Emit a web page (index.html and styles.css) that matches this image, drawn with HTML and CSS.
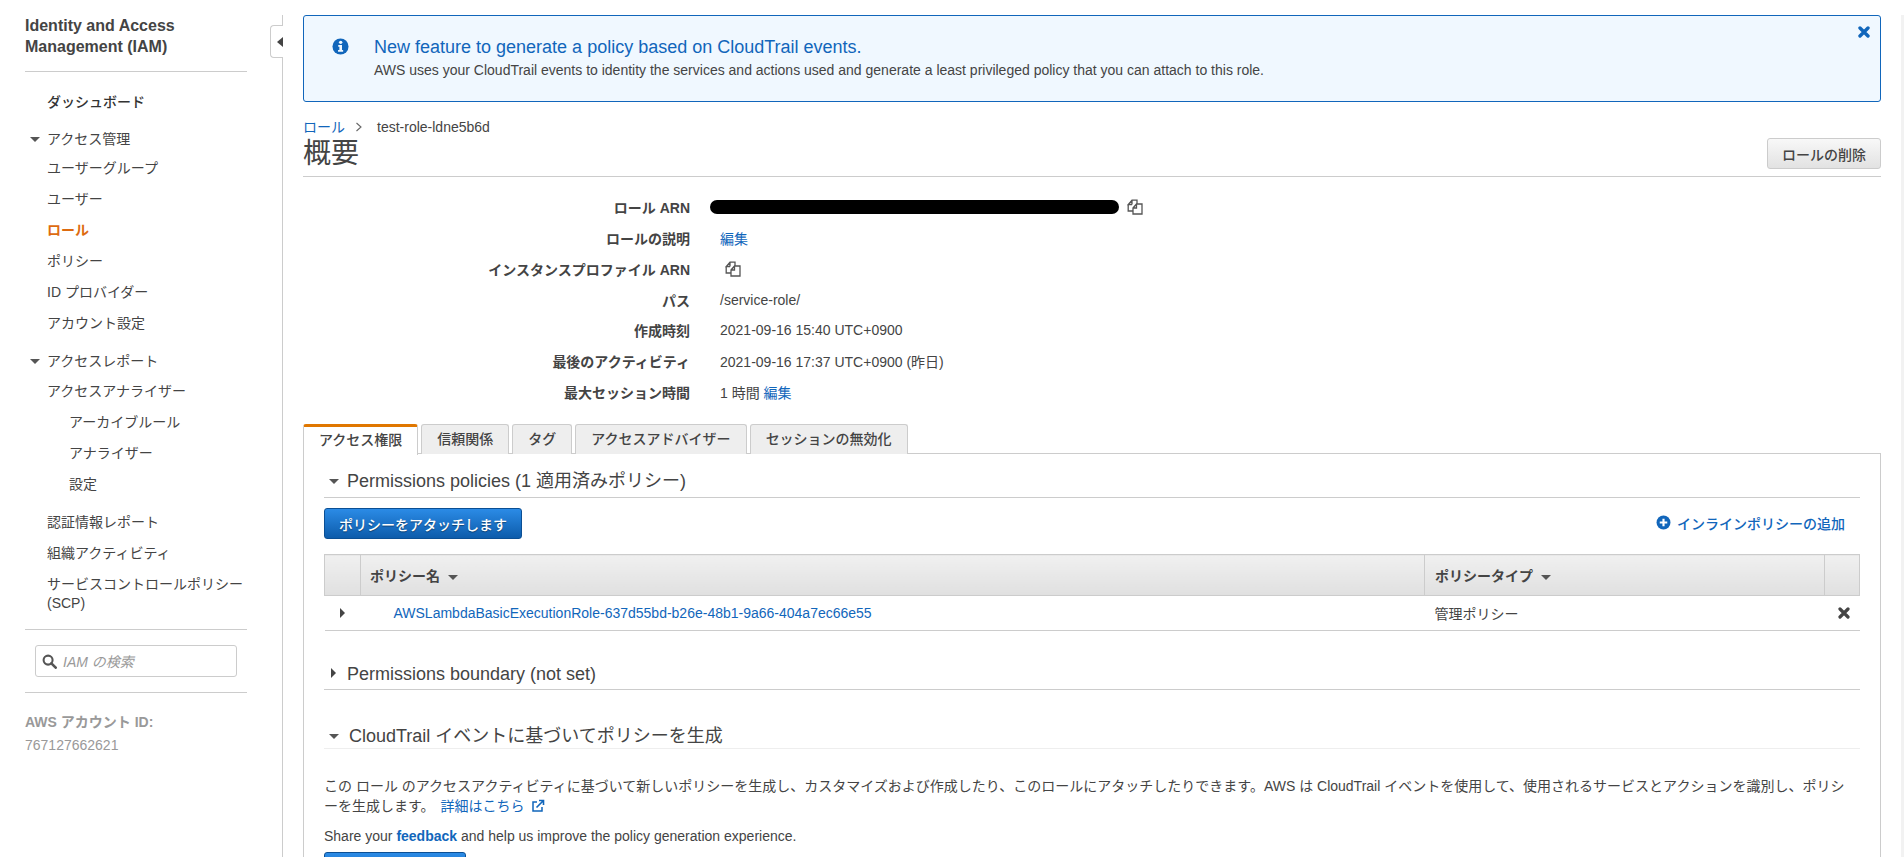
FILE: index.html
```html
<!DOCTYPE html>
<html lang="ja">
<head>
<meta charset="utf-8">
<title>IAM ロール</title>
<link rel="stylesheet" href="styles.css">
</head>
<body>
<div class="page">
  <nav class="nav">
    <h1 class="nav-title">Identity and Access<br>Management (IAM)</h1>
    <ul class="nav-list">
      <li class="row strong">ダッシュボード</li>
      <li class="group g1"><span class="caret-down"></span>アクセス管理</li>
      <li class="row">ユーザーグループ</li>
      <li class="row">ユーザー</li>
      <li class="row active">ロール</li>
      <li class="row">ポリシー</li>
      <li class="row">ID プロバイダー</li>
      <li class="row">アカウント設定</li>
      <li class="group g2"><span class="caret-down"></span>アクセスレポート</li>
      <li class="row">アクセスアナライザー</li>
      <li class="row sub">アーカイブルール</li>
      <li class="row sub">アナライザー</li>
      <li class="row sub">設定</li>
      <li class="row after-sub">認証情報レポート</li>
      <li class="row">組織アクティビティ</li>
      <li class="row multi">サービスコントロールポリシー (SCP)</li>
    </ul>
    <div class="nav-search-wrap">
      <div class="nav-search">
        <svg class="search-icon" viewBox="0 0 16 16"><circle cx="6.5" cy="6.5" r="4.8" fill="none" stroke="#555" stroke-width="2.2"/><path d="M10 10l4.6 4.6" stroke="#555" stroke-width="2.8" stroke-linecap="round"/></svg>
        <span class="search-ph">IAM の検索</span>
      </div>
    </div>
    <div class="acct">
      <div class="acct-label">AWS アカウント ID:</div>
      <div class="acct-num">767127662621</div>
    </div>
    <div class="nav-toggle"><span class="caret-left"></span></div>
  </nav>

  <main class="main">
    <section class="banner">
      <svg class="info-icon" viewBox="0 0 18 18"><circle cx="9" cy="9" r="8.5" fill="#1166bb"/><circle cx="9.2" cy="4.6" r="1.8" fill="#f0f8ff"/><path d="M6.6 7.4h4v5.2h1.2v1.9H6.4v-1.9h1.4V9.3H6.6z" fill="#f0f8ff"/></svg>
      <div class="banner-text">
        <div class="banner-title">New feature to generate a policy based on CloudTrail events.</div>
        <div class="banner-desc">AWS uses your CloudTrail events to identity the services and actions used and generate a least privileged policy that you can attach to this role.</div>
      </div>
      <svg class="banner-close" viewBox="0 0 12 12"><path d="M2 2l8 8M10 2l-8 8" stroke="#1166bb" stroke-width="3.4" stroke-linecap="round"/></svg>
    </section>

    <div class="crumbs"><a class="link">ロール</a><svg class="crumb-sep" viewBox="0 0 8 10"><path d="M1.5 1l4.5 4-4.5 4" fill="none" stroke="#666" stroke-width="1.1"/></svg><span>test-role-ldne5b6d</span></div>
    <div class="title-row">
      <h2 class="page-title">概要</h2>
      <button class="btn-default">ロールの削除</button>
    </div>

    <dl class="summary">
      <div class="sum-row"><dt>ロール ARN</dt><dd class="arn-cell"><span class="redact"></span><svg class="copy-icon" viewBox="0 0 16 16"><path d="M5 5.500H1.200L5 1.200h5v3.800M5 1.200v4.300M1.200 5.500V12H6" fill="none" stroke="#555" stroke-width="1.300"/><path d="M6 9l3.500-4H15v10H6zM9.500 5v4H6" fill="#fff" stroke="#555" stroke-width="1.300"/></svg></dd></div>
      <div class="sum-row"><dt>ロールの説明</dt><dd><a class="link">編集</a></dd></div>
      <div class="sum-row"><dt>インスタンスプロファイル ARN</dt><dd><svg class="copy-icon solo" viewBox="0 0 16 16"><path d="M5 5.500H1.200L5 1.200h5v3.800M5 1.200v4.300M1.200 5.500V12H6" fill="none" stroke="#555" stroke-width="1.300"/><path d="M6 9l3.500-4H15v10H6zM9.500 5v4H6" fill="#fff" stroke="#555" stroke-width="1.300"/></svg></dd></div>
      <div class="sum-row"><dt>パス</dt><dd>/service-role/</dd></div>
      <div class="sum-row"><dt>作成時刻</dt><dd>2021-09-16 15:40 UTC+0900</dd></div>
      <div class="sum-row"><dt>最後のアクティビティ</dt><dd>2021-09-16 17:37 UTC+0900 (昨日)</dd></div>
      <div class="sum-row"><dt>最大セッション時間</dt><dd>1 時間 <a class="link">編集</a></dd></div>
    </dl>

    <div class="tabs">
      <div class="tab on">アクセス権限</div>
      <div class="tab">信頼関係</div>
      <div class="tab">タグ</div>
      <div class="tab">アクセスアドバイザー</div>
      <div class="tab">セッションの無効化</div>
    </div>

    <section class="panel">
      <h3 class="sec-head first"><span class="caret-down dark"></span>Permissions policies (1 適用済みポリシー)</h3>
      <div class="actions">
        <button class="btn-primary">ポリシーをアタッチします</button>
        <a class="add-inline"><svg class="plus-icon" viewBox="0 0 14 14"><circle cx="7" cy="7" r="6.500" fill="#1166bb"/><path d="M7 3.500v7M3.500 7h7" stroke="#fff" stroke-width="2"/></svg>インラインポリシーの追加</a>
      </div>
      <table class="grid">
        <thead>
          <tr>
            <th class="c-exp"></th>
            <th class="c-name">ポリシー名<span class="caret-down th-caret"></span></th>
            <th class="c-type">ポリシータイプ<span class="caret-down th-caret"></span></th>
            <th class="c-del"></th>
          </tr>
        </thead>
        <tbody>
          <tr>
            <td class="c-exp"><span class="caret-right"></span></td>
            <td class="c-name"><a class="link policy">AWSLambdaBasicExecutionRole-637d55bd-b26e-48b1-9a66-404a7ec66e55</a></td>
            <td class="c-type">管理ポリシー</td>
            <td class="c-del"><svg class="del-icon" viewBox="0 0 12 12"><path d="M2 2l8 8M10 2l-8 8" stroke="#444" stroke-width="3.200" stroke-linecap="round"/></svg></td>
          </tr>
        </tbody>
      </table>
      <h3 class="sec-head boundary"><span class="caret-right head-caret"></span>Permissions boundary (not set)</h3>
      <h3 class="sec-head cloud"><span class="caret-down"></span>CloudTrail イベントに基づいてポリシーを生成</h3>
      <p class="para">この ロール のアクセスアクティビティに基づいて新しいポリシーを生成し、カスタマイズおよび作成したり、このロールにアタッチしたりできます。AWS は CloudTrail イベントを使用して、使用されるサービスとアクションを識別し、ポリシ<br>ーを生成します。 <a class="link more">詳細はこちら<svg class="ext-icon" viewBox="0 0 14 14"><path d="M11 8v4H2V3h4" fill="none" stroke="#1166bb" stroke-width="1.500"/><path d="M5.500 8.500L12 2M8 1.500h4.500V6" fill="none" stroke="#1166bb" stroke-width="1.600"/></svg></a></p>
      <p class="share">Share your <a class="link feedback">feedback</a> and help us improve the policy generation experience.</p>
      <button class="btn-primary generate" aria-label="generate"></button>
    </section>
  </main>
  <div class="edge"></div>
</div>
</body>
</html>
```
FILE: styles.css
```css
* { box-sizing: border-box; }
html, body { margin: 0; height: 100%; overflow: hidden; background: #fff; }
body {
  font-family: "Liberation Sans", "Noto Sans CJK JP", sans-serif;
  font-size: 14px;
  color: #444;
}
.page { display: flex; height: 842px; margin-top: 15px; overflow: hidden; position: relative; }
.link { color: #1166bb; text-decoration: none; }

/* carets */
.caret-down, .caret-right, .caret-left { display: inline-block; width: 0; height: 0; }
.caret-down { border-left: 5px solid transparent; border-right: 5px solid transparent; border-top: 5px solid #555; }
.caret-right { border-top: 5px solid transparent; border-bottom: 5px solid transparent; border-left: 5px solid #444; }
.caret-left { border-top: 5px solid transparent; border-bottom: 5px solid transparent; border-right: 6px solid #444; }

/* nav */
.nav { width: 283px; flex: none; border-right: 1px solid #ccc; position: relative; padding: 0 35px 0 25px; }
.nav-title { margin: 0; font-size: 16px; line-height: 21px; font-weight: 700; color: #444; padding-bottom: 14px; border-bottom: 1px solid #ccc; }
.nav-list { list-style: none; margin: 15px 0 0; padding: 0; }
.row { height: 31px; line-height: 31px; padding-left: 22px; white-space: nowrap; }
.strong { font-weight: 500; color: #333; }
.active { color: #dd6b10; font-weight: 700; }
.group { height: 29px; line-height: 29px; padding-left: 5px; white-space: nowrap; }
.group.g1 { margin-top: 7px; height: 28px; }
.group.g2 { margin-top: 8px; }
.group .caret-down { margin-right: 7px; vertical-align: 2px; }
.sub { padding-left: 44px; }
.after-sub { margin-top: 7px; }
.multi { height: auto; line-height: 19px; padding: 6px 0 0 22px; white-space: normal; }
.nav-search-wrap { margin-top: 16px; padding: 15px 10px; border-top: 1px solid #ccc; border-bottom: 1px solid #ccc; }
.nav-search { height: 32px; border: 1px solid #ccc; border-radius: 3px; display: flex; align-items: center; padding-left: 6px; }
.search-icon { width: 15px; height: 15px; flex: none; }
.search-ph { margin-left: 6px; color: #999; font-style: italic; }
.acct { margin-top: 19px; color: #999; }
.acct-label { font-weight: 700; line-height: 20px; }
.acct-num { line-height: 20px; margin-top: 3px; }
.nav-toggle { position: absolute; left: 270px; top: 10px; width: 13px; height: 33px; background: #fff; border: 1px solid #ccc; border-right: 0; border-radius: 4px 0 0 4px; display: flex; align-items: center; justify-content: flex-end; }

/* main */
.main { width: 1598px; flex: none; padding-left: 20px; }
.banner { height: 87px; background: #f0f8ff; border: 1px solid #1166bb; border-radius: 3px; display: flex; position: relative; padding: 20px 0 0 28px; }
.info-icon { width: 17px; height: 17px; flex: none; margin-top: 2px; }
.banner-text { margin-left: 25px; }
.banner-title { font-size: 18px; line-height: 22px; color: #1166bb; }
.banner-desc { font-size: 14px; line-height: 18px; margin-top: 3px; color: #444; }
.banner-close { position: absolute; right: 10px; top: 10px; width: 12px; height: 12px; }

.crumbs { margin-top: 16px; height: 18px; line-height: 18px; display: flex; align-items: center; }
.crumb-sep { width: 8px; height: 10px; margin: 0 14px 0 10px; }
.title-row { height: 41px; display: flex; justify-content: space-between; align-items: flex-start; border-bottom: 1px solid #ccc; }
.page-title { margin: 0; font-size: 28px; line-height: 36px; font-weight: 400; color: #444; }
.btn-default { height: 31px; width: 114px; margin-top: 2px; padding: 0; font: inherit; font-weight: 500; color: #444; background: linear-gradient(#f8f8f8, #e2e2e2); border: 1px solid #ccc; border-radius: 3px; }

.summary { margin: 15px 0 0; }
.sum-row { height: 30.75px; display: flex; align-items: center; }
.sum-row dt { width: 387px; text-align: right; font-weight: 700; color: #444; }
.sum-row dd { margin: 0 0 0 30px; white-space: nowrap; }
.arn-cell { display: flex; align-items: center; }
.sum-row .arn-cell { margin-left: 20px; }
.redact { width: 409px; height: 14px; background: #000; border-radius: 7px; }
.copy-icon { width: 16px; height: 16px; margin-left: 8px; display: block; }
.copy-icon.solo { margin-left: 5px; }

.tabs { display: flex; gap: 3px; margin-top: 17px; height: 31px; position: relative; z-index: 1; }
.tab { height: 30px; line-height: 29px; padding: 0 15px; border: 1px solid #ccc; border-bottom: 0; background: #eee; border-radius: 3px 3px 0 0; font-weight: 500; white-space: nowrap; }
.tab.on { height: 31px; background: #fff; border-top: 3px solid #e07700; line-height: 27px; }

.panel { margin-top: -2px; height: 431px; border: 1px solid #ccc; border-bottom: 0; padding: 0 20px; overflow: hidden; }
.sec-head { margin: 0; font-size: 18px; line-height: 24px; font-weight: 400; color: #444; white-space: nowrap; }
.sec-head.first { margin-top: 15px; padding-bottom: 4px; padding-left: 5px; border-bottom: 1px solid #ccc; }
.sec-head .caret-down { margin-right: 8px; vertical-align: 3px; }
.actions { display: flex; justify-content: space-between; align-items: center; margin-top: 10px; }
.btn-primary { height: 31px; width: 198px; padding: 0; font: inherit; font-weight: 500; color: #fff; background: linear-gradient(#2b8be6, #0d5cab); border: 1px solid #0b4f94; border-radius: 3px; text-shadow: 0 1px 1px rgba(0,0,0,.4); }
.add-inline { display: flex; align-items: center; color: #1166bb; font-weight: 500; padding-right: 15px; margin-bottom: 2px; }
.plus-icon { width: 15px; height: 15px; margin-right: 6px; }

.grid { width: 100%; margin-top: 15px; border-collapse: collapse; table-layout: fixed; }
.grid th { height: 41px; border: 1px solid #ccc; background: linear-gradient(#f0f0f0, #e0e0e0); text-align: left; font-weight: 700; padding: 0 10px; }
.grid th.c-name { padding-left: 9px; }
.grid td { height: 35px; border-bottom: 1px solid #ccc; padding: 0 10px; }
.c-exp { width: 36px; }
.c-type { width: 400px; }
.c-del { width: 35px; }
.grid .c-exp { padding: 0 0 0 15px; }
.grid td.c-name { padding-left: 33px; }
.th-caret { margin-left: 8px; vertical-align: 1px; }
.del-icon { width: 12px; height: 12px; display: block; margin-left: 3px; }

.sec-head.boundary { margin-top: 31px; padding: 0 0 3px 5px; border-bottom: 1px solid #ccc; }
.head-caret { margin-right: 11px; margin-left: 2px; vertical-align: 2px; }
.sec-head.cloud { margin-top: 34px; padding: 0 0 0 5px; border-bottom: 1px solid #eee; }
.sec-head.cloud .caret-down { margin-right: 10px; }
.para { margin: 27px 0 0; line-height: 20px; white-space: nowrap; }
.more { margin-left: 2px; }
.ext-icon { width: 14px; height: 14px; margin-left: 6px; vertical-align: -2px; }
.share { margin: 10px 0 0; line-height: 20px; }
.feedback { font-weight: 700; }
.generate { display: block; width: 142px; margin-top: 6px; }
.edge { flex: 1; margin-left: 20px; background: #f2f2f2; }
```
